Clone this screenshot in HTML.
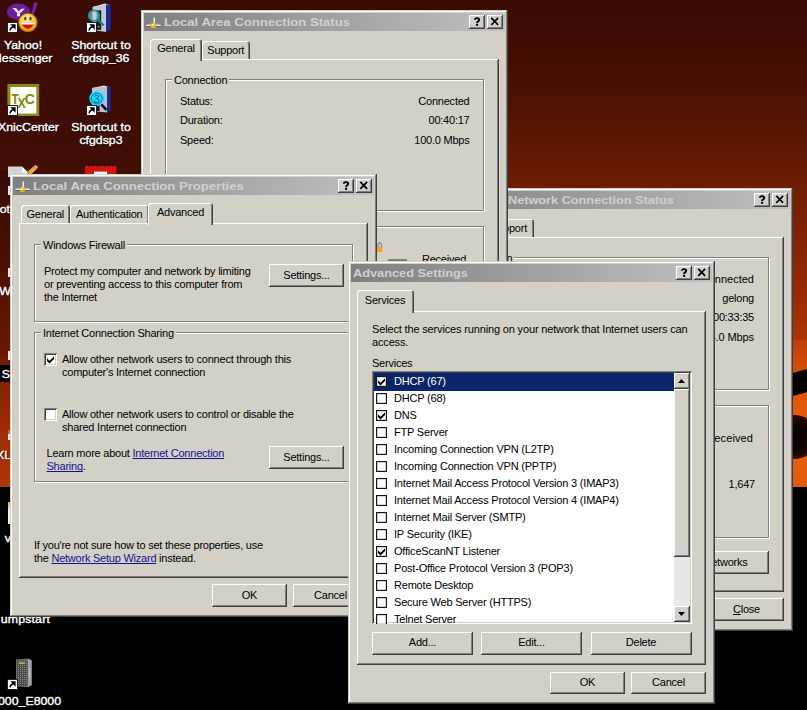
<!DOCTYPE html>
<html>
<head>
<meta charset="utf-8">
<title>Desktop</title>
<style>
*{box-sizing:border-box;margin:0;padding:0}
html,body{width:807px;height:710px;overflow:hidden;background:#000}
body{font-family:"Liberation Sans",sans-serif;font-size:11px;color:#000;position:relative;letter-spacing:-0.23px}
#desk{position:absolute;left:0;top:0;width:807px;height:710px;overflow:hidden;
 background:linear-gradient(180deg,#380a02 0px,#4a1002 90px,#701d03 190px,#9a2b04 300px,#b43606 350px,#c03c06 486px,#000 486px,#000 710px)}
.abs{position:absolute}
.win{position:absolute;background:#d4d0c8;overflow:hidden;
 box-shadow:inset -1px -1px #404040,inset 1px 1px #d4d0c8,inset -2px -2px #808080,inset 2px 2px #fff}
.title{position:absolute;left:3px;right:3px;top:3px;height:18px;background:linear-gradient(90deg,#808080 0%,#c0c0c0 100%);
 color:#d4d0c8;font-weight:bold;font-size:13px;line-height:17px;white-space:nowrap;letter-spacing:0}
.tb{position:absolute;top:2px;width:16px;height:14px;background:#d4d0c8;
 box-shadow:inset -1px -1px #404040,inset 1px 1px #fff,inset -2px -2px #808080}
.tb svg{position:absolute;left:0;top:.3px}
.btn{position:absolute;background:#d4d0c8;text-align:center;white-space:nowrap;
 box-shadow:inset -1px -1px #404040,inset 1px 1px #fff,inset -2px -2px #808080}
.page{position:absolute;background:#d4d0c8;
 box-shadow:inset -1px -1px #404040,inset 1px 1px #fff,inset -2px -2px #808080}
.tab{position:absolute;background:#d4d0c8;text-align:center;white-space:nowrap;
 border-top-left-radius:3px;border-top-right-radius:3px;
 box-shadow:inset 1px 1px #fff,inset -1px 0 #404040,inset -2px 0 #808080}
.grp{position:absolute;border:1px solid #808080;box-shadow:inset 1px 1px #fff,1px 1px #fff}
.grp>span{position:absolute;left:6px;top:-6px;background:#d4d0c8;padding:0 2px;white-space:nowrap;line-height:13px}
.t{position:absolute;white-space:nowrap;line-height:13px}
.r{text-align:right}
.cb{position:absolute;width:13px;height:13px;background:#fff;
 box-shadow:inset 1px 1px #808080,inset -1px -1px #fff,inset 2px 2px #404040,inset -2px -2px #d4d0c8}
.cb svg{position:absolute;left:3px;top:3px}
a{color:#12128e;text-decoration:underline;text-decoration-skip-ink:none}
.lbl{position:absolute;color:#fff;font-weight:normal;font-size:11px;line-height:13px;-webkit-text-stroke:0.35px #fff;transform:scaleX(1.12);margin-top:1px;text-align:center;white-space:nowrap;letter-spacing:0;
 text-shadow:1px 1px 1px #000}
.lc{position:absolute;width:11px;height:11px;background:#fff;border:1px solid #404040}
.list{position:absolute;background:#fff;overflow:hidden;box-shadow:inset 1px 1px #808080,inset -1px -1px #fff,inset 2px 2px #404040,inset -2px -2px #d4d0c8}
.row{position:absolute;left:2px;width:300px;height:17px;line-height:16px;white-space:nowrap;letter-spacing:-0.2px}
.row i{position:absolute;left:2px;top:3px;width:11px;height:11px;background:#fff;border:1px solid #141414;box-shadow:inset 0 0 0 .5px rgba(0,0,0,.35)}
.row i svg{position:absolute;left:1px;top:.5px}
.row b{position:absolute;left:20px;top:0;font-weight:normal}
</style>
</head>
<body>
<div id="desk">
<div class="abs" style="left:0px;top:0px;width:141px;height:178px;background:linear-gradient(180deg,#3a0b06 0,#3c0c05 100px,#420e04 178px);"></div>
<div class="abs" style="left:0px;top:170px;width:12px;height:320px;background:linear-gradient(180deg,#380b04 0,#4a1003 90px,#681802 180px,#741c02 195px,#050000 195px,#050000 212px,#842203 212px,#a02e05 270px,#ae3506 317px,#000 317px);"></div>
<div class="abs" style="left:790px;top:340px;width:17px;height:147px;background:linear-gradient(180deg,#bc3e08 0,#d24c09 25px,#e2590b 70px,#e65e0e 110px,#e25a0c 147px);"></div>
<div class="abs" style="left:785px;top:371px;width:30px;height:23px;background:#020000;transform:skewY(-16deg);"></div>
<div class="abs" style="left:773px;top:415px;width:44px;height:44px;background:radial-gradient(circle at 50% 50%,#060100 0,#120300 45%,#3a0e02 75%,#8a3006 92%,rgba(226,90,12,0) 100%);border-radius:50%;"></div>
<div class="lbl" style="left:-47.5px;width:140px;top:38px;">Yahoo!</div>
<div class="lbl" style="left:-48px;width:140px;top:51px;">Messenger</div>
<div class="lbl" style="left:30.5px;width:140px;top:38px;">Shortcut to</div>
<div class="lbl" style="left:30.5px;width:140px;top:51px;">cfgdsp_36</div>
<div class="lbl" style="left:-48px;width:140px;top:119.5px;">TeXnicCenter</div>
<div class="lbl" style="left:30.5px;width:140px;top:119.5px;">Shortcut to</div>
<div class="lbl" style="left:30.5px;width:140px;top:132.8px;">cfgdsp3</div>
<div class="lbl" style="left:-10.5px;width:60px;top:612px;text-align:right;transform-origin:100% 50%"><span style="letter-spacing:.15px">umpstart</span></div>
<div class="lbl" style="left:-48px;width:140px;top:693.5px;">V1000_E8000</div>
<div class="lbl" style="left:-50px;width:60px;top:202px;text-align:right;transform-origin:100% 50%">ot</div>
<div class="lbl" style="left:-49.5px;width:60px;top:284px;text-align:right;transform-origin:100% 50%">W</div>
<div class="lbl" style="left:-50px;width:60px;top:366.5px;text-align:right;transform-origin:100% 50%">S</div>
<div class="lbl" style="left:-49.5px;width:60px;top:448px;text-align:right;transform-origin:100% 50%">XL</div>
<div class="lbl" style="left:-49.5px;width:60px;top:530.5px;text-align:right;transform-origin:100% 50%">v</div>
<svg class="abs" style="left:5px;top:2px" width="36" height="31" viewBox="0 0 36 31"><defs><radialGradient id="sm" cx="45%" cy="30%" r="75%"><stop offset="0" stop-color="#fff27a"/><stop offset="0.55" stop-color="#f8c420"/><stop offset="1" stop-color="#d87808"/></radialGradient></defs><ellipse cx="13.5" cy="9.8" rx="11.6" ry="8.2" fill="#6c1c9c"/><path d="M29.2 0.2 L32.8 0.9 L28.4 13.4 L26.2 12.6 Z" fill="#7a22a8"/><path d="M7.5 6 L11 6 L13.6 9.3 L16.4 6.8 L20 6.8 L15 11.2 L15 14.2 L12 14.2 L12 11 Z" fill="#f2e6fa"/><circle cx="22.9" cy="20.6" r="9.4" fill="url(#sm)"/><circle cx="22.9" cy="20.6" r="9.2" fill="none" stroke="#a86408" stroke-width="0.8"/><path d="M15.6 20.3 Q22.9 33.5 30.2 20.3 Z" fill="#c8140c"/><path d="M15.6 20.3 H30.2 L29.2 22.6 H16.6 Z" fill="#fff"/><ellipse cx="20.3" cy="16.6" rx="1.1" ry="1.9" fill="#2a3a90"/><ellipse cx="25.5" cy="16.6" rx="1.1" ry="1.9" fill="#2a3a90"/></svg><svg class="abs" style="left:7px;top:22px" width="11" height="11" viewBox="0 0 11 11"><rect x="0" y="0" width="11" height="11" fill="#fff"/><rect x="0.5" y="0.5" width="10" height="10" fill="none" stroke="#202020" stroke-width="1"/><path d="M3 8.5 Q3.2 5 6.5 4.8 M4.8 3 H8 V6.2 Z" stroke="#000" stroke-width="1.3" fill="#000"/></svg><svg class="abs" style="left:84px;top:2px" width="30" height="31" viewBox="0 0 30 31"><path d="M8.5 5 L21 1.6 L26.6 3.6 L15 6.5 Z" fill="#e4e6ea"/><path d="M8.5 5 L22 2.4 L22 30 L8.5 28 Z" fill="#c4c8d0"/><path d="M22 2.4 L26.6 3.6 L26.6 27.6 L22 30 Z" fill="#1c2a98"/><rect x="12.6" y="8.4" width="4.6" height="19.4" fill="#101a18"/><rect x="13.8" y="12" width="1.6" height="1.6" fill="#30e060"/><rect x="13.8" y="15.8" width="1.6" height="1.6" fill="#30e060"/><rect x="13.8" y="24" width="1.6" height="1.6" fill="#30e060"/><circle cx="10" cy="13.6" r="5.3" fill="#b8d8d8" fill-opacity=".6" stroke="#0c9494" stroke-width="1.8"/><path d="M13.8 17.6 L19.6 23.4" stroke="#0c8888" stroke-width="2.4"/></svg><svg class="abs" style="left:86px;top:22px" width="11" height="11" viewBox="0 0 11 11"><rect x="0" y="0" width="11" height="11" fill="#fff"/><rect x="0.5" y="0.5" width="10" height="10" fill="none" stroke="#202020" stroke-width="1"/><path d="M3 8.5 Q3.2 5 6.5 4.8 M4.8 3 H8 V6.2 Z" stroke="#000" stroke-width="1.3" fill="#000"/></svg><svg class="abs" style="left:7px;top:84px" width="33" height="33" viewBox="0 0 33 33"><rect x="0.4" y="0" width="31.8" height="32" fill="#8a8a14"/><rect x="3.4" y="3" width="26" height="26.6" fill="#fdfdf8"/><g font-family="Liberation Sans" font-weight="bold" font-size="14" fill="#86860e"><text x="4.4" y="19.8" textLength="7" lengthAdjust="spacingAndGlyphs">T</text><text x="10.4" y="23.6" textLength="8" lengthAdjust="spacingAndGlyphs">X</text><text x="17.8" y="19.8">C</text></g></svg><svg class="abs" style="left:7px;top:105px" width="11" height="11" viewBox="0 0 11 11"><rect x="0" y="0" width="11" height="11" fill="#fff"/><rect x="0.5" y="0.5" width="10" height="10" fill="none" stroke="#202020" stroke-width="1"/><path d="M3 8.5 Q3.2 5 6.5 4.8 M4.8 3 H8 V6.2 Z" stroke="#000" stroke-width="1.3" fill="#000"/></svg><svg class="abs" style="left:84px;top:85px" width="30" height="31" viewBox="0 0 30 31"><path d="M8 3 L20 0.6 L26.6 2.6 L14 5 Z" fill="#e4e6ea"/><path d="M8 3 L23 1.4 L23 27.6 L8 26 Z" fill="#bcc0c8"/><path d="M23 1.4 L26.6 2.6 L26.6 25.6 L23 27.6 Z" fill="#1c2a98"/><rect x="13" y="18" width="2.6" height="8" fill="#101a18"/><rect x="13.6" y="19.6" width="1.4" height="1.4" fill="#30e060"/><circle cx="12.7" cy="13.6" r="7.4" fill="#14e6f6"/><circle cx="12.7" cy="13.6" r="5.4" fill="none" stroke="#1c48e0" stroke-width="0.9"/><text x="9.6" y="17.6" font-family="Liberation Sans" font-size="11" fill="#1c3cdc">3</text><path d="M17.4 19.4 L22.4 24.8" stroke="#0a0a0a" stroke-width="2.6"/></svg><svg class="abs" style="left:86px;top:105px" width="11" height="11" viewBox="0 0 11 11"><rect x="0" y="0" width="11" height="11" fill="#fff"/><rect x="0.5" y="0.5" width="10" height="10" fill="none" stroke="#202020" stroke-width="1"/><path d="M3 8.5 Q3.2 5 6.5 4.8 M4.8 3 H8 V6.2 Z" stroke="#000" stroke-width="1.3" fill="#000"/></svg><svg class="abs" style="left:8px;top:163px" width="32" height="14" viewBox="0 0 32 14"><path d="M0 3.6 H14 L20 9.6 V14 H0 Z" fill="#d4d4d4"/><path d="M14 3.6 L20 9.6 H14 Z" fill="#f4f4f4"/><path d="M19 9.4 L25.4 3.4 L28.6 6.2 L22.4 12 Z" fill="#e4b030"/><path d="M25.4 3.4 L27.4 2 Q29.6 2.2 30 4.6 L28.6 6.2 Z" fill="#e890a0"/></svg><svg class="abs" style="left:85px;top:165px" width="33" height="12" viewBox="0 0 33 12"><path d="M0 1.6 L2 0.6 L4 1.8 L6 0.6 L8 1.6 L10 0.6 L12 1.8 L14 0.8 L16 1.6 L18 0.6 L20 1.8 L22 0.6 L24 1.6 L26 0.6 L28 1.8 L30 0.6 L31.4 1.6 V12 H0 Z" fill="#d41414"/><rect x="9" y="6.6" width="13" height="6" fill="#fff"/></svg><div class="abs" style="left:8px;top:186px;width:3px;height:9px;background:#e8e8e8;"></div>
<div class="abs" style="left:8px;top:268px;width:3px;height:9px;background:#e8e8e8;"></div>
<div class="abs" style="left:8px;top:351px;width:3px;height:9px;background:#e8e8e8;"></div>
<div class="abs" style="left:8px;top:430px;width:3px;height:10px;background:linear-gradient(180deg,#e05a20 0,#e05a20 40%,#f0f0f0 41%);"></div>
<div class="abs" style="left:8px;top:502px;width:3px;height:22px;background:linear-gradient(180deg,#e0a040 0,#f0f0f0 40%,#f0f0f0 100%);"></div>
<svg class="abs" style="left:15px;top:658px" width="18" height="30" viewBox="0 0 18 30"><path d="M1 1.4 L13 0.6 L16.6 2.6 L16.6 27 L13 29 L1 28.4 Z" fill="#6e6e6e"/><path d="M13 0.6 L16.6 2.6 L16.6 27 L13 29 Z" fill="#a4a4a4"/><rect x="2" y="2.4" width="10.4" height="25.4" fill="#4c4c4c"/><path d="M3.5 3 V27.4 M5.5 3 V27.4 M7.5 3 V27.4 M9.5 3 V27.4 M11.5 3 V27.4" stroke="#8c8c8c" stroke-width="0.9" stroke-dasharray="1 1"/><rect x="4" y="4.4" width="6" height="1.4" fill="#c8c020"/><path d="M14.6 10 V20" stroke="#d0d0d0" stroke-width="0.8"/></svg><svg class="abs" style="left:7px;top:678.5px" width="11" height="11" viewBox="0 0 11 11"><rect x="0" y="0" width="11" height="11" fill="#fff"/><rect x="0.5" y="0.5" width="10" height="10" fill="none" stroke="#202020" stroke-width="1"/><path d="M3 8.5 Q3.2 5 6.5 4.8 M4.8 3 H8 V6.2 Z" stroke="#000" stroke-width="1.3" fill="#000"/></svg>
</div>
<div class="win" style="left:426px;top:188px;width:367px;height:443px;"></div>
<div class="title" style="left:429px;top:191px;width:361px;height:18px;"><span class="abs" style="left:78.5px;top:1px;font-size:11.5px;transform:scaleX(1.105);transform-origin:0 0">Network Connection Status</span><div class="tb" style="right:20px"><svg width="16" height="13" viewBox="0 0 16 13"><path d="M5.9 4.7 Q5.9 3.1 8 3.1 Q10.2 3.1 10.2 4.7 Q10.2 5.7 9.1 6.3 Q8.1 6.9 8.1 8.2" stroke="#000" stroke-width="1.9" fill="none"/><rect x="7.1" y="9" width="2" height="1.9" fill="#000"/></svg></div><div class="tb" style="right:2px"><svg width="16" height="13" viewBox="0 0 16 13"><path d="M4.3 2.8 L11.1 9.8 M11.1 2.8 L4.3 9.8" stroke="#000" stroke-width="1.7" fill="none"/></svg></div></div>
<div class="page" style="left:435px;top:237px;width:349px;height:355px;"></div>
<div class="tab" style="left:486px;top:219px;width:48px;height:18px;line-height:19px;"><span style="position:absolute;right:7px;top:0">Support</span></div>
<div class="grp" style="left:450px;top:257px;width:319px;height:133px;"><span>Connection</span></div>
<div class="grp" style="left:450px;top:404.5px;width:319px;height:133px;"><span>Activity</span></div>
<div class="t r" style="left:554px;width:200px;top:273px;letter-spacing:0">Connected</div>
<div class="t r" style="left:554px;width:200px;top:292px;">gelong</div>
<div class="t r" style="left:554px;width:200px;top:311px;">00:33:35</div>
<div class="t r" style="left:554px;width:200px;top:330.5px;letter-spacing:-0.1px">54.0 Mbps</div>
<div class="t r" style="left:553px;width:200px;top:431.5px;letter-spacing:0.1px">Received</div>
<div class="t r" style="left:555px;width:200px;top:478px;">1,647</div>
<div class="btn" style="left:620px;top:551px;width:148.5px;height:22.5px;line-height:21.5px;"><span style="position:absolute;right:21px;top:1px">View Wireless Networks</span></div>
<div class="btn" style="left:709px;top:597.5px;width:75px;height:23px;line-height:22px;"><u>C</u>lose</div>

<div class="win" style="left:141px;top:10px;width:367px;height:460px;"></div>
<div class="title" style="left:144px;top:13px;width:361px;height:18px;"><svg class="abs" style="left:1px;top:3px" width="17" height="14" viewBox="0 0 17 14"><path d="M9.3 1.6 V9" stroke="#f8f8f8" stroke-width="1.4"/><path d="M1.4 9.3 H15.6" stroke="#f8f8f8" stroke-width="1.4"/><path d="M1.6 10.4 H15.4" stroke="#505050" stroke-width="0.8"/><rect x="6" y="7.2" width="4.8" height="4.8" fill="#e4b01c"/><rect x="6.8" y="7.8" width="2.4" height="2" fill="#fff2a0"/></svg><span class="abs" style="left:20px;top:1px;font-size:11.5px;transform:scaleX(1.14);transform-origin:0 0">Local Area Connection Status</span><div class="tb" style="right:20px"><svg width="16" height="13" viewBox="0 0 16 13"><path d="M5.9 4.7 Q5.9 3.1 8 3.1 Q10.2 3.1 10.2 4.7 Q10.2 5.7 9.1 6.3 Q8.1 6.9 8.1 8.2" stroke="#000" stroke-width="1.9" fill="none"/><rect x="7.1" y="9" width="2" height="1.9" fill="#000"/></svg></div><div class="tb" style="right:2px"><svg width="16" height="13" viewBox="0 0 16 13"><path d="M4.3 2.8 L11.1 9.8 M11.1 2.8 L4.3 9.8" stroke="#000" stroke-width="1.7" fill="none"/></svg></div></div>
<div class="page" style="left:150px;top:59px;width:349px;height:380px;"></div>
<div class="tab" style="left:202px;top:41px;width:47.5px;height:18px;line-height:19px;">Support</div>
<div class="tab" style="left:150px;top:39px;width:52px;height:22px;line-height:19px;">General</div>
<div class="grp" style="left:165px;top:79px;width:319px;height:132px;"><span>Connection</span></div>
<div class="t" style="left:180px;top:94.5px;">Status:</div>
<div class="t" style="left:180px;top:113.5px;">Duration:</div>
<div class="t" style="left:180px;top:133.5px;">Speed:</div>
<div class="t r" style="left:269.5px;width:200px;top:94.5px;">Connected</div>
<div class="t r" style="left:269.5px;width:200px;top:113.5px;">00:40:17</div>
<div class="t r" style="left:269.5px;width:200px;top:133.5px;">100.0 Mbps</div>
<div class="grp" style="left:165px;top:226px;width:319px;height:194px;"></div>
<div class="t" style="left:422px;top:253px;">Received</div>
<div class="abs" style="left:388px;top:259px;width:19px;height:2px;background:#808080;"></div>
<svg class="abs" style="left:376px;top:242px" width="7" height="11" viewBox="0 0 7 11"><path d="M2 5 V3 Q2 1 3.7 1 Q5.4 1 5.4 3 V5" stroke="#8a8aa0" stroke-width="1.3" fill="none"/><rect x="0.8" y="4.6" width="5.6" height="5.6" fill="#f0a828"/></svg>
<div class="win" style="left:10px;top:174px;width:367px;height:443px;"></div>
<div class="title" style="left:13px;top:177px;width:361px;height:18px;"><svg class="abs" style="left:1px;top:3px" width="17" height="14" viewBox="0 0 17 14"><path d="M9.3 1.6 V9" stroke="#f8f8f8" stroke-width="1.4"/><path d="M1.4 9.3 H15.6" stroke="#f8f8f8" stroke-width="1.4"/><path d="M1.6 10.4 H15.4" stroke="#505050" stroke-width="0.8"/><rect x="6" y="7.2" width="4.8" height="4.8" fill="#e4b01c"/><rect x="6.8" y="7.8" width="2.4" height="2" fill="#fff2a0"/></svg><span class="abs" style="left:20px;top:1px;font-size:11.5px;transform:scaleX(1.14);transform-origin:0 0">Local Area Connection Properties</span><div class="tb" style="right:20px"><svg width="16" height="13" viewBox="0 0 16 13"><path d="M5.9 4.7 Q5.9 3.1 8 3.1 Q10.2 3.1 10.2 4.7 Q10.2 5.7 9.1 6.3 Q8.1 6.9 8.1 8.2" stroke="#000" stroke-width="1.9" fill="none"/><rect x="7.1" y="9" width="2" height="1.9" fill="#000"/></svg></div><div class="tb" style="right:2px"><svg width="16" height="13" viewBox="0 0 16 13"><path d="M4.3 2.8 L11.1 9.8 M11.1 2.8 L4.3 9.8" stroke="#000" stroke-width="1.7" fill="none"/></svg></div></div>
<div class="page" style="left:19px;top:223px;width:349px;height:355px;"></div>
<div class="tab" style="left:21px;top:205px;width:48.5px;height:18px;line-height:19px;">General</div>
<div class="tab" style="left:69.5px;top:205px;width:79.5px;height:18px;line-height:19px;">Authentication</div>
<div class="tab" style="left:148px;top:203px;width:65px;height:22px;line-height:19px;">Advanced</div>
<div class="grp" style="left:34px;top:244px;width:319px;height:78px;"><span>Windows Firewall</span></div>
<div class="t" style="left:44px;top:265px;">Protect my computer and network by limiting<br>or preventing access to this computer from<br>the Internet</div>
<div class="btn" style="left:269px;top:264px;width:75px;height:23px;line-height:22px;">Settings...</div>
<div class="grp" style="left:34px;top:332px;width:319px;height:150px;"><span>Internet Connection Sharing</span></div>
<div class="cb" style="left:44px;top:353px;width:13px;height:13px;"><svg width="7" height="8" viewBox="0 0 7 8"><path d="M0 2.2 L2.5 4.7 L7 0.2 V3 L2.5 7.5 L0 5 Z" fill="#000"/></svg></div>
<div class="t" style="left:62px;top:353px;">Allow other network users to connect through this<br>computer's Internet connection</div>
<div class="cb" style="left:44px;top:408px;width:13px;height:13px;"></div>
<div class="t" style="left:62px;top:408px;">Allow other network users to control or disable the<br>shared Internet connection</div>
<div class="t" style="left:46.5px;top:447px;">Learn more about <a>Internet Connection</a><br><a>Sharing</a>.</div>
<div class="btn" style="left:269px;top:446px;width:75px;height:23px;line-height:22px;">Settings...</div>
<div class="t" style="left:34px;top:539px;">If you're not sure how to set these properties, use<br>the <a>Network Setup Wizard</a> instead.</div>
<div class="btn" style="left:212px;top:584px;width:75px;height:23px;line-height:22px;">OK</div>
<div class="btn" style="left:293px;top:584px;width:75px;height:23px;line-height:22px;">Cancel</div>

<div class="win" style="left:348px;top:261px;width:367px;height:443px;"></div>
<div class="title" style="left:351px;top:264px;width:361px;height:18px;"><span class="abs" style="left:2px;top:1px;font-size:11.5px;transform:scaleX(1.11);transform-origin:0 0">Advanced Settings</span><div class="tb" style="right:20px"><svg width="16" height="13" viewBox="0 0 16 13"><path d="M5.9 4.7 Q5.9 3.1 8 3.1 Q10.2 3.1 10.2 4.7 Q10.2 5.7 9.1 6.3 Q8.1 6.9 8.1 8.2" stroke="#000" stroke-width="1.9" fill="none"/><rect x="7.1" y="9" width="2" height="1.9" fill="#000"/></svg></div><div class="tb" style="right:2px"><svg width="16" height="13" viewBox="0 0 16 13"><path d="M4.3 2.8 L11.1 9.8 M11.1 2.8 L4.3 9.8" stroke="#000" stroke-width="1.7" fill="none"/></svg></div></div>
<div class="page" style="left:357px;top:311px;width:349px;height:354px;"></div>
<div class="tab" style="left:356.5px;top:289.5px;width:57px;height:23.5px;line-height:20.5px;">Services</div>
<div class="t" style="left:372px;top:323px;letter-spacing:-0.155px">Select the services running on your network that Internet users can<br>access.</div>
<div class="t" style="left:372px;top:357px;">Services</div>
<div class="list" style="left:372px;top:371px;width:320px;height:253px;"><div class="row" style="top:2px;background:#0a246a;color:#fff;height:18px;"><i><svg width="7" height="8" viewBox="0 0 7 8"><path d="M0 2.2 L2.5 4.7 L7 0.2 V3 L2.5 7.5 L0 5 Z" fill="#000"/></svg></i><b>DHCP (67)</b></div><div class="row" style="top:19px;"><i></i><b>DHCP (68)</b></div><div class="row" style="top:36px;"><i><svg width="7" height="8" viewBox="0 0 7 8"><path d="M0 2.2 L2.5 4.7 L7 0.2 V3 L2.5 7.5 L0 5 Z" fill="#000"/></svg></i><b>DNS</b></div><div class="row" style="top:53px;"><i></i><b>FTP Server</b></div><div class="row" style="top:70px;"><i></i><b>Incoming Connection VPN (L2TP)</b></div><div class="row" style="top:87px;"><i></i><b>Incoming Connection VPN (PPTP)</b></div><div class="row" style="top:104px;"><i></i><b>Internet Mail Access Protocol Version 3 (IMAP3)</b></div><div class="row" style="top:121px;"><i></i><b>Internet Mail Access Protocol Version 4 (IMAP4)</b></div><div class="row" style="top:138px;"><i></i><b>Internet Mail Server (SMTP)</b></div><div class="row" style="top:155px;"><i></i><b>IP Security (IKE)</b></div><div class="row" style="top:172px;"><i><svg width="7" height="8" viewBox="0 0 7 8"><path d="M0 2.2 L2.5 4.7 L7 0.2 V3 L2.5 7.5 L0 5 Z" fill="#000"/></svg></i><b>OfficeScanNT Listener</b></div><div class="row" style="top:189px;"><i></i><b>Post-Office Protocol Version 3 (POP3)</b></div><div class="row" style="top:206px;"><i></i><b>Remote Desktop</b></div><div class="row" style="top:223px;"><i></i><b>Secure Web Server (HTTPS)</b></div><div class="row" style="top:240px;"><i></i><b>Telnet Server</b></div><div class="abs" style="left:302px;top:2px;width:16px;height:249px;background:#e9e7e3"></div><div class="btn" style="left:302px;top:2px;width:16px;height:16px"><svg class="abs" style="left:4px;top:6px" width="7" height="4"><path d="M0 4 L3.5 0 L7 4 Z" fill="#000"/></svg></div><div class="btn" style="left:302px;top:18px;width:16px;height:168px"></div><div class="btn" style="left:302px;top:235px;width:16px;height:16px"><svg class="abs" style="left:4px;top:6px" width="7" height="4"><path d="M0 0 L3.5 4 L7 0 Z" fill="#000"/></svg></div></div>
<div class="btn" style="left:372px;top:632px;width:101px;height:22.5px;line-height:21.5px;">Add...</div>
<div class="btn" style="left:481px;top:632px;width:101px;height:22.5px;line-height:21.5px;">Edit...</div>
<div class="btn" style="left:590.5px;top:632px;width:101px;height:22.5px;line-height:21.5px;">Delete</div>
<div class="btn" style="left:550px;top:671.5px;width:75px;height:22px;line-height:21px;">OK</div>
<div class="btn" style="left:631px;top:671.5px;width:75px;height:22px;line-height:21px;">Cancel</div>

</body>
</html>
